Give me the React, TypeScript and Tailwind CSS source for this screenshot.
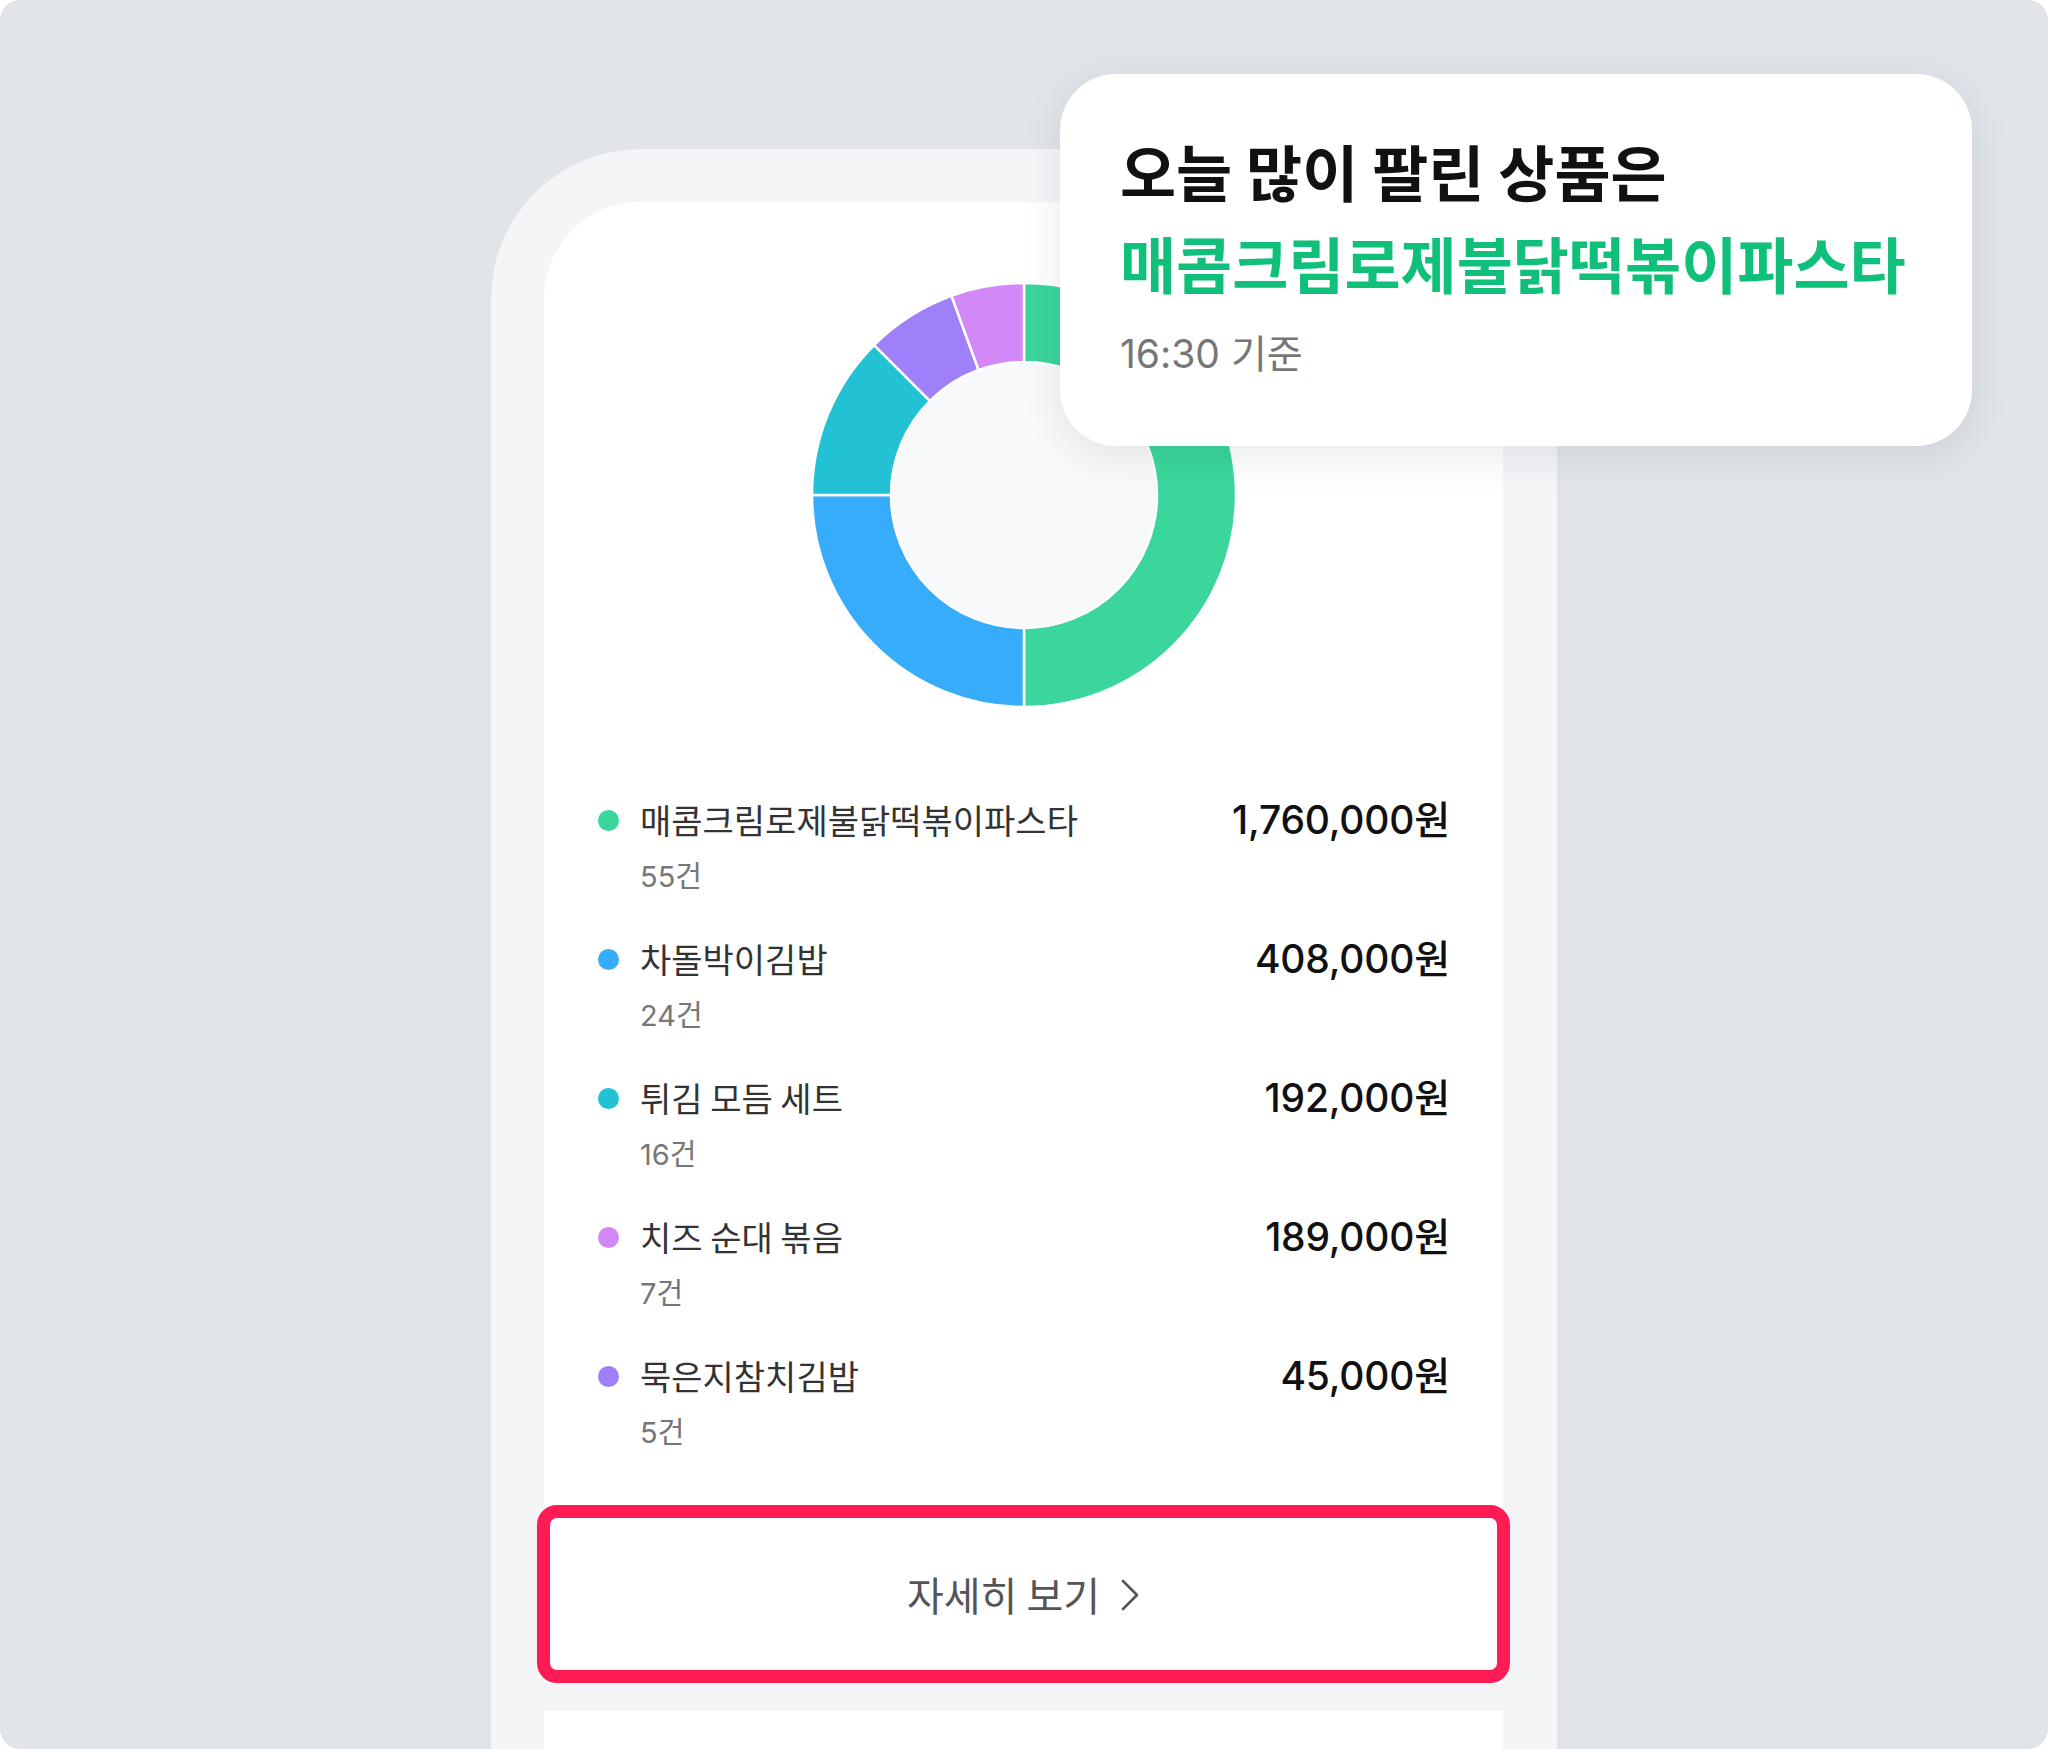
import React from "react";

type Seg = { a0: number; a1: number; c: string };

const segs: Seg[] = [
  { a0: 0, a1: 180, c: "#3ad69b" },
  { a0: 180, a1: 270, c: "#37acfa" },
  { a0: 270, a1: 315, c: "#22c2d4" },
  { a0: 315, a1: 340, c: "#a07ffa" },
  { a0: 340, a1: 360, c: "#d388f7" },
];

const C = 212;
function pt(R: number, a: number): [number, number] {
  const r = (a * Math.PI) / 180;
  return [C + R * Math.sin(r), C - R * Math.cos(r)];
}
function arcPath(a0: number, a1: number) {
  const R = 212;
  const r = 133;
  const large = a1 - a0 > 180 ? 1 : 0;
  const [x0, y0] = pt(R, a0);
  const [x1, y1] = pt(R, a1);
  const [x2, y2] = pt(r, a1);
  const [x3, y3] = pt(r, a0);
  return `M ${x0} ${y0} A ${R} ${R} 0 ${large} 1 ${x1} ${y1} L ${x2} ${y2} A ${r} ${r} 0 ${large} 0 ${x3} ${y3} Z`;
}

function Donut() {
  return (
    <svg width="424" height="424" viewBox="0 0 424 424" className="block mx-auto">
      {segs.map((s, i) => (
        <path key={i} d={arcPath(s.a0, s.a1)} fill={s.c} stroke="#ffffff" strokeWidth="2.5" strokeLinejoin="miter" />
      ))}
      <circle cx={C} cy={C} r={132} fill="#f8f9fa" />
    </svg>
  );
}

const items = [
  { name: "매콤크림로제불닭떡볶이파스타", count: "55건", amount: "1,760,000원", color: "#3ad69b" },
  { name: "차돌박이김밥", count: "24건", amount: "408,000원", color: "#37acfa" },
  { name: "튀김 모듬 세트", count: "16건", amount: "192,000원", color: "#22c2d4" },
  { name: "치즈 순대 볶음", count: "7건", amount: "189,000원", color: "#d388f7" },
  { name: "묵은지참치김밥", count: "5건", amount: "45,000원", color: "#a07ffa" },
];

export default function App() {
  return (
    <div className="w-[2048px] h-[1749px] bg-white">
      <div className="relative w-full h-full overflow-hidden rounded-[20px] bg-[#e1e5ea] pt-[149px] pl-[491px]">
        {/* phone frame */}
        <div className="w-[1066px] h-[1700px] rounded-t-[150px] bg-[#f3f5f7] pt-[53px] pl-[53px] pr-[54px]">
          <div className="flex flex-col">
            <div className="bg-white rounded-t-[96px] pt-[81px]">
              <Donut />
              <div className="mt-[91px] pl-[54px] pr-[53px] flex flex-col gap-[40px]">
                {items.map((it, i) => (
                  <div key={i} className="flex justify-between items-start">
                    <div className="flex flex-col">
                      <div className="flex items-center h-[44px]">
                        <span className="w-[21px] h-[21px] rounded-full mr-[21px] shrink-0" style={{ backgroundColor: it.color }} />
                        <span className="text-[34px] leading-[44px] text-[#333333] font-['Noto_Sans_CJK_KR',sans-serif]">
                          {it.name}
                        </span>
                      </div>
                      <div className="mt-[14px] pl-[42px] text-[29px] leading-[41px] text-[#777777] font-['Inter','Noto_Sans_CJK_KR',sans-serif]">
                        {it.count}
                      </div>
                    </div>
                    <div className="h-[44px] flex items-center text-[39px] leading-[44px] font-medium text-[#111111] tracking-[-0.005em] font-['Inter','Noto_Sans_CJK_KR',sans-serif]">
                      {it.amount}
                    </div>
                  </div>
                ))}
              </div>
              <div className="relative mt-[52px] h-[178px] flex items-center justify-center gap-[20px]">
                <span className="text-[40px] leading-[52px] text-[#555555] font-['Noto_Sans_CJK_KR',sans-serif]">자세히 보기</span>
                <svg width="20" height="34" viewBox="0 0 20 34" className="mt-[2px]">
                  <path d="M3 3 L17 17 L3 31" fill="none" stroke="#555555" strokeWidth="2.6" strokeLinecap="round" strokeLinejoin="round" />
                </svg>
                <div className="absolute -left-[7px] -right-[7px] top-0 bottom-0 border-[13px] border-[#ff1c55] rounded-[20px]" />
              </div>
            </div>
            <div className="mt-[28px] h-[200px] bg-white" />
          </div>
        </div>

        {/* tooltip card */}
        <div className="absolute left-[1060px] top-[74px] w-[912px] h-[372px] rounded-[56px] bg-white pl-[60px] pt-[51px] shadow-[0_10px_40px_rgba(30,40,60,0.10)]">
          <div className="text-[61px] leading-[92px] font-bold text-[#111111] font-['Noto_Sans_CJK_KR',sans-serif]">
            오늘 많이 팔린 상품은
          </div>
          <div className="text-[61px] leading-[92px] font-bold text-[#10c07a] font-['Noto_Sans_CJK_KR',sans-serif]">
            매콤크림로제불닭떡볶이파스타
          </div>
          <div className="mt-[22px] text-[39px] leading-[46px] text-[#767676] font-['Inter','Noto_Sans_CJK_KR',sans-serif]">
            16:30 기준
          </div>
        </div>
      </div>
    </div>
  );
}
